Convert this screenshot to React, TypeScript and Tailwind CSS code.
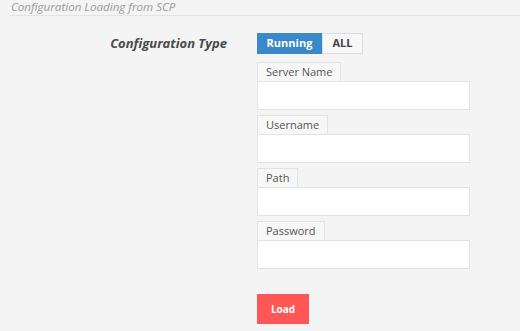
import React from "react";

const Field = ({ label }: { label: string }) => (
  <div className="flex flex-col items-start">
    <div className="h-[19px] px-[8px] border border-[#e2e2e2] border-b-0 bg-[#f7f7f7] text-[11px] leading-[18px] text-[#555]">
      {label}
    </div>
    <div className="h-[29px] w-[213px] border border-[#e2e2e2] bg-white" />
  </div>
);

export default function App() {
  return (
    <div
      className="w-[520px] h-[331px] bg-[#f4f4f4] overflow-hidden"
      style={{ fontFamily: '"Open Sans", "Noto Sans", sans-serif' }}
    >
      <div className="ml-[10px] h-[16px] border-b border-[#e3e3e3] text-[11.6px] italic text-[#9a9a9a] leading-[14px] pl-[1px]">
        Configuration Loading from SCP
      </div>
      <div className="flex mt-[17px]">
        <div className="w-[257px] pr-[30px] flex justify-end pt-[2px]">
          <span className="text-[13px] font-bold italic text-[#4a4a4a] leading-[17px]">
            Configuration Type
          </span>
        </div>
        <div className="flex flex-col">
          <div className="flex h-[21px]">
            <div className="w-[65px] bg-[#3a87c9] text-white text-[11px] font-bold flex items-center justify-center">
              Running
            </div>
            <div className="w-[41px] border border-[#dcdcdc] bg-[#f7f7f7] text-[#444] text-[11px] font-bold flex items-center justify-center">
              ALL
            </div>
          </div>
          <div className="flex flex-col gap-[5px] mt-[8px]">
            <Field label="Server Name" />
            <Field label="Username" />
            <Field label="Path" />
            <Field label="Password" />
          </div>
          <div className="mt-[25px] w-[52px] h-[30px] bg-[#ff5656] text-white text-[10px] font-bold flex items-center justify-center">
            Load
          </div>
        </div>
      </div>
    </div>
  );
}
